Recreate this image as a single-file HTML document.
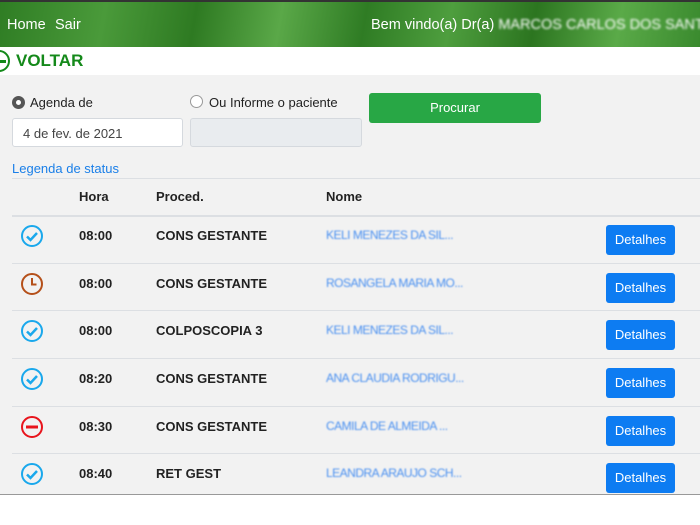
<!DOCTYPE html>
<html><head><meta charset="utf-8"><style>
*{box-sizing:border-box;margin:0;padding:0}
body{width:700px;height:525px;background:#fff;font-family:"Liberation Sans",sans-serif;position:relative;overflow:hidden}
.hdr{position:absolute;left:0;top:0;width:700px;height:47px;background:linear-gradient(100deg,#2f7d24 0%,#4a9a3a 15%,#2e7a22 28%,#5aa848 40%,#2f7c24 52%,#4e9e3e 64%,#2c7520 76%,#5aaa48 88%,#3a8a2e 100%);border-top:2px solid #333}
.hdr span{position:absolute;color:#fff;font-size:14.5px;top:15px}
.voltar{position:absolute;left:16px;top:51px;color:#14891a;font-weight:bold;font-size:17px}
.vc{position:absolute;left:-12px;top:50px;width:22px;height:22px;border:2.5px solid #14891a;border-radius:50%}
.vc:after{content:"";position:absolute;left:8px;top:8px;width:8px;height:2.5px;background:#14891a}
.main{position:absolute;left:0;top:75px;width:700px;height:420px;background:#f2f2f2;border-bottom:1px solid #999}
.t{position:absolute;font-size:13px;color:#222}
.radio{position:absolute;width:13px;height:13px;border-radius:50%;border:1px solid #999;background:#fff}
.inp{position:absolute;height:29px;border:1px solid #d5d9de;border-radius:3px;background:#fff;font-size:13px;color:#444;padding:7px 10px}
.btn{position:absolute;left:369px;top:93px;width:172px;height:30px;background:#28a745;border-radius:3px;color:#fff;font-size:13px;text-align:center;line-height:30px}
.line{position:absolute;left:12px;right:0;height:1px;background:#dcdfe3}
.th{position:absolute;top:189px;font-weight:bold;font-size:13px;color:#222}
.row{position:absolute;left:0;width:700px;height:48px}
.row .h{position:absolute;left:79px;top:13px;font-weight:bold;font-size:13px;color:#222}
.row .p{position:absolute;left:156px;top:13px;font-weight:bold;font-size:13px;color:#222}
.row .n{position:absolute;left:326px;top:13px;font-size:12px;color:#4a90f0;filter:blur(0.7px);letter-spacing:-0.5px}
.row .d{position:absolute;left:606px;top:10px;width:69px;height:30px;background:#0d7cf2;border-radius:3px;color:#fff;font-size:13px;text-align:center;line-height:30px}
.row svg{position:absolute;left:20px;top:9px}
</style></head><body>
<div class="hdr"><span style="left:7px">Home</span><span style="left:55px">Sair</span><span style="left:371px;white-space:nowrap">Bem vindo(a) Dr(a) <span style="position:static;filter:blur(1px)">MARCOS CARLOS DOS SANTOS</span></span></div>
<div class="vc"></div><div class="voltar">VOLTAR</div>
<div class="main"></div>
<div class="radio" style="left:12px;top:96px;border:4px solid #555"></div>
<div class="t" style="left:30px;top:95px">Agenda de</div>
<div class="radio" style="left:190px;top:95px"></div>
<div class="t" style="left:209px;top:95px">Ou Informe o paciente</div>
<div class="inp" style="left:12px;top:118px;width:171px">4 de fev. de 2021</div>
<div class="inp" style="left:190px;top:118px;width:172px;background:#e9ecef"></div>
<div class="btn">Procurar</div>
<div class="t" style="left:12px;top:161px;color:#1a7fe8">Legenda de status</div>
<div class="line" style="top:178px"></div>
<div class="th" style="left:79px">Hora</div><div class="th" style="left:156px">Proced.</div><div class="th" style="left:326px">Nome</div>
<div class="line" style="top:215px;height:2px"></div>
<div class="line" style="top:263px"></div><div class="line" style="top:310px"></div><div class="line" style="top:358px"></div><div class="line" style="top:406px"></div><div class="line" style="top:453px"></div>

<div class="row" style="top:215px"><svg width="24" height="24"><circle cx="12" cy="12" r="10" fill="none" stroke="#1aa8ec" stroke-width="2"/><path d="M7 12.5l3.5 3.5 6.5-7" fill="none" stroke="#1aa8ec" stroke-width="2.5"/></svg><span class="h">08:00</span><span class="p">CONS GESTANTE</span><span class="n">KELI MENEZES DA SIL...</span><div class="d">Detalhes</div></div>
<div class="row" style="top:263px"><svg width="24" height="24"><circle cx="12" cy="12" r="10" fill="none" stroke="#b5501a" stroke-width="2"/><path d="M12 6v6.5h4.5" fill="none" stroke="#b5501a" stroke-width="2"/></svg><span class="h">08:00</span><span class="p">CONS GESTANTE</span><span class="n">ROSANGELA MARIA MO...</span><div class="d">Detalhes</div></div>
<div class="row" style="top:310px"><svg width="24" height="24"><circle cx="12" cy="12" r="10" fill="none" stroke="#1aa8ec" stroke-width="2"/><path d="M7 12.5l3.5 3.5 6.5-7" fill="none" stroke="#1aa8ec" stroke-width="2.5"/></svg><span class="h">08:00</span><span class="p">COLPOSCOPIA 3</span><span class="n">KELI MENEZES DA SIL...</span><div class="d">Detalhes</div></div>
<div class="row" style="top:358px"><svg width="24" height="24"><circle cx="12" cy="12" r="10" fill="none" stroke="#1aa8ec" stroke-width="2"/><path d="M7 12.5l3.5 3.5 6.5-7" fill="none" stroke="#1aa8ec" stroke-width="2.5"/></svg><span class="h">08:20</span><span class="p">CONS GESTANTE</span><span class="n">ANA CLAUDIA RODRIGU...</span><div class="d">Detalhes</div></div>
<div class="row" style="top:406px"><svg width="24" height="24"><circle cx="12" cy="12" r="10" fill="none" stroke="#e8141c" stroke-width="2"/><path d="M6 12h12" stroke="#e8141c" stroke-width="3"/></svg><span class="h">08:30</span><span class="p">CONS GESTANTE</span><span class="n">CAMILA DE ALMEIDA ...</span><div class="d">Detalhes</div></div>
<div class="row" style="top:453px"><svg width="24" height="24"><circle cx="12" cy="12" r="10" fill="none" stroke="#1aa8ec" stroke-width="2"/><path d="M7 12.5l3.5 3.5 6.5-7" fill="none" stroke="#1aa8ec" stroke-width="2.5"/></svg><span class="h">08:40</span><span class="p">RET GEST</span><span class="n">LEANDRA ARAUJO SCH...</span><div class="d">Detalhes</div></div>
</body></html>
